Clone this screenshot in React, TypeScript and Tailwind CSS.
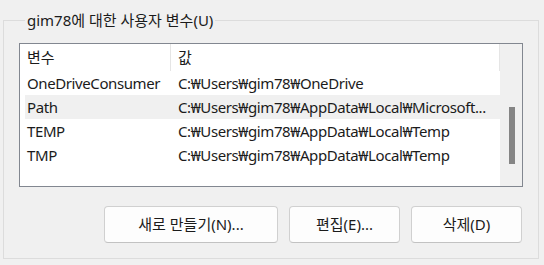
import React from 'react';

const rows = [
  { name: 'OneDriveConsumer', value: 'C:₩Users₩gim78₩OneDrive' },
  { name: 'Path', value: 'C:₩Users₩gim78₩AppData₩Local₩Microsoft...', selected: true },
  { name: 'TEMP', value: 'C:₩Users₩gim78₩AppData₩Local₩Temp' },
  { name: 'TMP', value: 'C:₩Users₩gim78₩AppData₩Local₩Temp' },
];

const WinButton: React.FC<{ label: string; width: string }> = ({ label, width }) => (
  <button
    className={`${width} h-[37px] shrink-0 rounded-[4px] border border-[#d0d0d0] border-b-[#c2c2c2] bg-[#fdfdfd] text-[15px] text-[#1b1b1b]`}
  >
    {label}
  </button>
);

export default function App() {
  return (
    <div className="w-[544px] h-[265px] bg-[#f0f0f0] pt-[10px] font-['Noto_Sans','Noto_Sans_CJK_KR',sans-serif] text-[#1b1b1b] overflow-hidden">
      <fieldset className="ml-[3px] w-[536px] min-w-0 border border-[#dcdcdc] px-[15px] pb-[15px]">
        <legend className="ml-[6px] px-[2px] text-[15px] leading-[20px]">gim78에 대한 사용자 변수(U)</legend>

        {/* list view */}
        <div className="mt-[13px] h-[144px] border border-[#828790] bg-white flex">
          <div className="flex-1 min-w-0">
            <div className="h-[27px] flex items-center text-[15px]">
              <div className="w-[151px] h-full pl-[7px] flex items-center border-r border-[#e5e5e5]">변수</div>
              <div className="flex-1 h-full pl-[7px] flex items-center border-r border-[#e5e5e5]">값</div>
            </div>
            <div className="pl-[5px]">
              {rows.map((r) => (
                <div
                  key={r.name}
                  className={`h-[24px] flex items-center text-[15px] tracking-[-0.4px] ${r.selected ? 'bg-[#f0f0f0]' : ''}`}
                >
                  <div className="w-[153px] shrink-0 pl-[2px] whitespace-nowrap">{r.name}</div>
                  <div className="flex-1 min-w-0 whitespace-nowrap overflow-hidden">{r.value}</div>
                </div>
              ))}
            </div>
          </div>

          {/* scrollbar */}
          <div className="w-[22px] shrink-0 h-full bg-[#f0f0f0] flex justify-center pt-[63px]">
            <div className="w-[6px] h-[57px] bg-[#858585] ml-[1px]" />
          </div>
        </div>

        <div className="mt-[19px] flex justify-end gap-[11px] pr-[1px]">
          <WinButton label="새로 만들기(N)..." width="w-[174px]" />
          <WinButton label="편집(E)..." width="w-[111px]" />
          <WinButton label="삭제(D)" width="w-[111px]" />
        </div>
      </fieldset>
    </div>
  );
}
